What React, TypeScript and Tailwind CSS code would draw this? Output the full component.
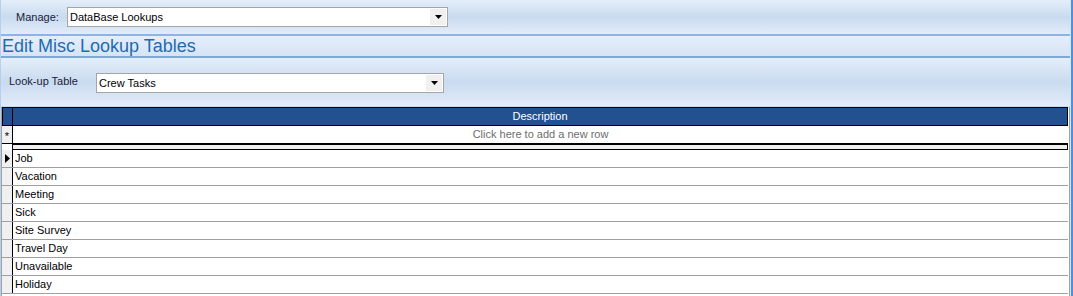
import React from "react";

const grad = "bg-[linear-gradient(to_bottom,#e4eefa_0%,#c9dbef_50%,#e2ecfa_100%)]";

function Combo({ value, width }: { value: string; width: string }) {
  return (
    <div className={`${width} h-[20px] border border-[#a5a5a5] bg-white flex items-center justify-between`}>
      <span className="pl-[2px] text-[11px] text-black">{value}</span>
      <div className="w-[16px] h-[16px] mr-[1px] bg-[#f0f0f0] flex items-center justify-center">
        <svg width="7" height="4" viewBox="0 0 7 4"><path d="M0 0H7L3.5 4Z" fill="#000" /></svg>
      </div>
    </div>
  );
}

const rows = ["Job", "Vacation", "Meeting", "Sick", "Site Survey", "Travel Day", "Unavailable", "Holiday"];

export default function App() {
  return (
    <div className="w-[1073px] h-[296px] overflow-hidden flex bg-white" style={{ fontFamily: '"Liberation Sans", Arial, sans-serif' }}>
      <div className="flex-1 flex flex-col border-l border-[#b7cfee]">
        <div className={`h-[34px] ${grad} flex items-center pl-[15px]`}>
          <span className="text-[11px] text-[#1b1b3a] w-[51px]">Manage:</span>
          <Combo value="DataBase Lookups" width="w-[381px]" />
        </div>
        <div className="h-[2px] bg-[#8fb3e3]" />
        <div className="h-[20px] bg-[linear-gradient(to_bottom,#e6eefa,#d6e4f4)] flex items-center pl-[1px]">
          <span className="text-[18px] leading-none text-[#1d6cb3]">Edit Misc Lookup Tables</span>
        </div>
        <div className="h-[2px] bg-[#7fa8d3]" />
        <div className={`h-[48px] ${grad} flex items-center pl-[8px] pt-[2px]`}>
          <span className="text-[11px] text-[#1b1b3a] w-[87px] -mt-[4px]">Look-up Table</span>
          <Combo value="Crew Tasks" width="w-[348px]" />
        </div>
        <div className="h-[1px] bg-[#c9d8ec]" />
        <div className="flex-1 bg-white border-l border-[#a0a0a0] pr-[1px] border-r border-r-[#a0a0a0]">
          <div className="flex h-[19px] bg-[#23518f] border border-black">
            <div className="w-[10px] border-r border-black" />
            <div className="flex-1 flex items-center justify-center text-[11px] text-white">Description</div>
          </div>
          <div className="flex h-[18px] border-b border-black">
            <div className="w-[11px] bg-[#f0f0f0] border-r border-black flex items-center justify-center text-[11px] leading-none pt-[3px] text-black">*</div>
            <div className="flex-1 flex items-center justify-center text-[11px] text-[#6d6d6d]">Click here to add a new row</div>
          </div>
          <div className="flex h-[6px]">
            <div className="w-[11px] border-r border-black" />
            <div className="flex-1 bg-[#f0f0f0] border border-black border-l-0" />
          </div>
          {rows.map((r, i) => (
            <div key={r} className="flex h-[18px] border-b border-[#a0a0a0]">
              <div className="w-[11px] bg-[#f0f0f0] border-r border-black flex items-center justify-center">
                {i === 0 && (
                  <svg width="5" height="9" viewBox="0 0 5 9"><path d="M0 0L5 4.5L0 9Z" fill="#000" /></svg>
                )}
              </div>
              <div className="flex-1 flex items-center pl-[2px] text-[11px] text-black">{r}</div>
            </div>
          ))}
        </div>
      </div>
      <div className="w-[1px] bg-[#d5e3f6]" />
      <div className="w-[2px] bg-[#4d8fe0]" />
    </div>
  );
}
